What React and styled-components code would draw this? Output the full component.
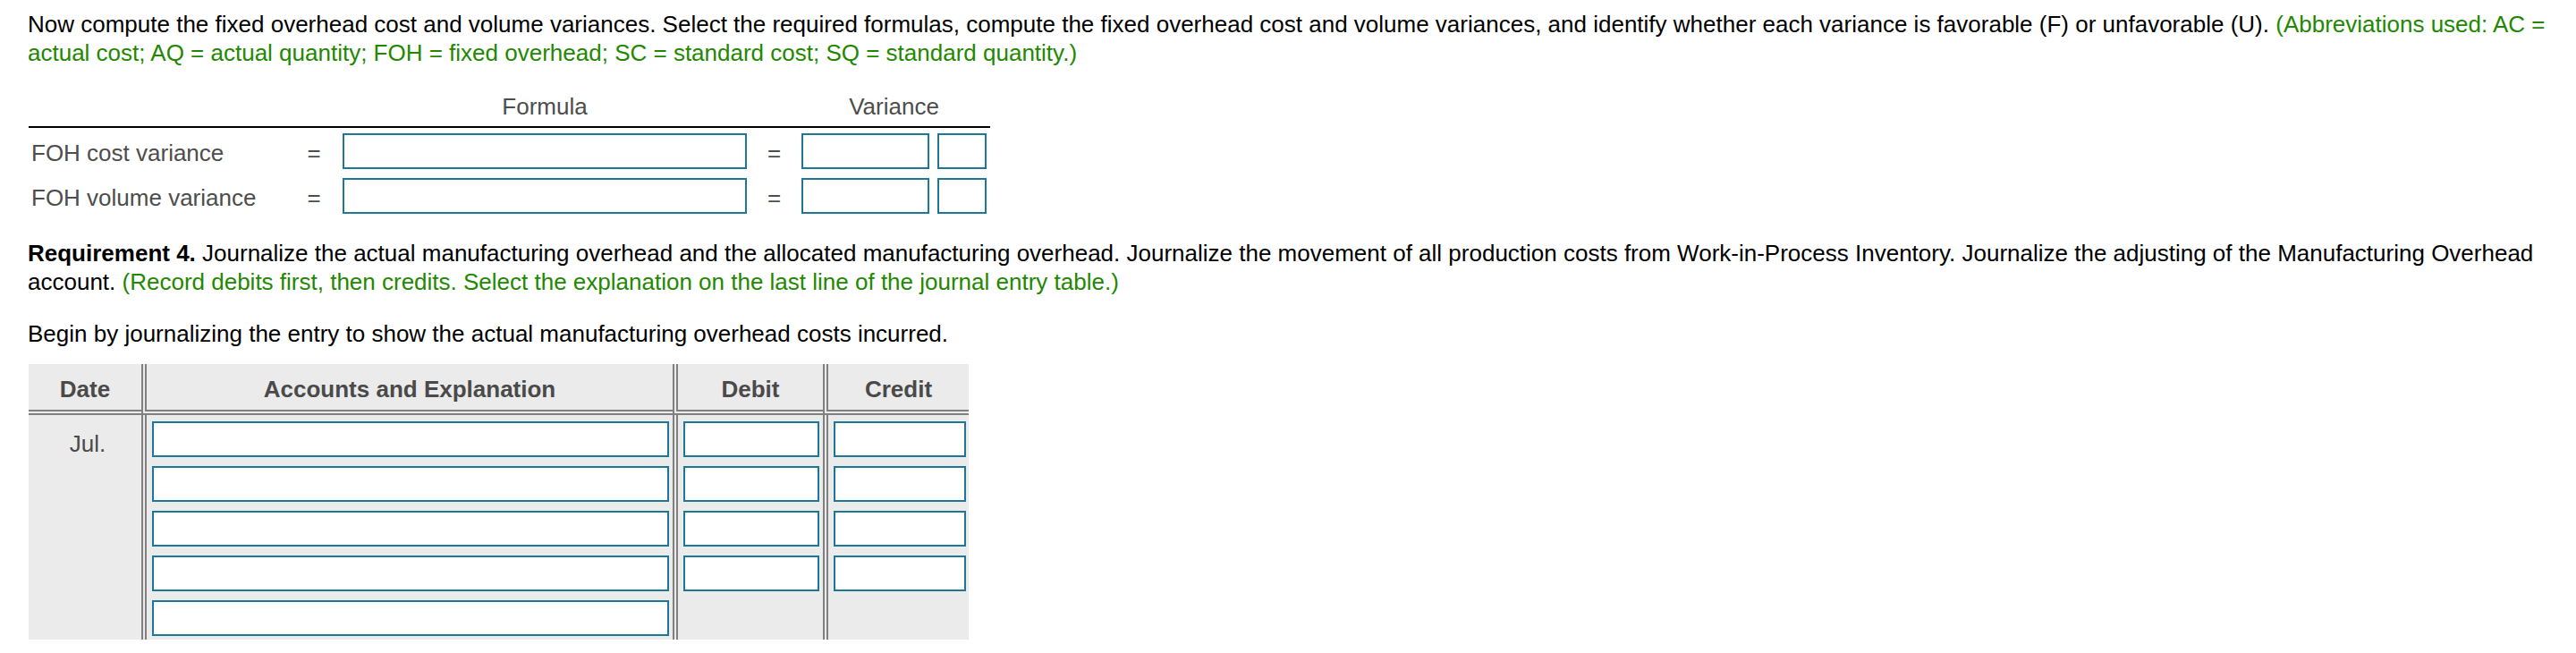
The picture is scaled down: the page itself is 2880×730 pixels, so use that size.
import React from 'react';
import styled, { createGlobalStyle } from 'styled-components';

const GlobalStyle = createGlobalStyle`
  body {
    margin: 0;
    background: #fff;
    font-family: "Liberation Sans", Arial, sans-serif;
    font-size: 26px;
    line-height: 32px;
    color: #000;
  }
`;

const Page = styled.div`
  padding: 11px 8px 0 31px;
`;

const Para = styled.p`
  margin: 0 0 ${props => props.$mb || 0}px;
`;

const Hint = styled.span`
  color: #228800;
`;

// Variance table
const FormulaTable = styled.div`
  width: 1075px;
  margin-left: 1px;
  color: #4d4d4d;
  margin-bottom: 28px;
`;

const HeaderRow = styled.div`
  display: flex;
  padding-bottom: 6px;
  border-bottom: 2px solid #000;
`;

const HeadCell = styled.div`
  width: ${props => props.$w}px;
  margin-left: ${props => props.$ml || 0}px;
  text-align: center;
`;

const Rows = styled.div`
  display: flex;
  flex-direction: column;
  gap: 10px;
  padding-top: 6px;
`;

const Row = styled.div`
  display: flex;
  align-items: center;
  height: 40px;
`;

const Label = styled.div`
  width: 302px;
  padding-left: 3px;
  box-sizing: border-box;
  padding-top: 4px;
`;

const Eq = styled.div`
  width: ${props => props.$w}px;
  text-align: center;
  padding-top: 3px;
`;

const Box = styled.input`
  box-sizing: border-box;
  width: ${props => props.$w}px;
  height: 40px;
  margin: 0 0 0 ${props => props.$ml || 0}px;
  padding: 0;
  border: 2px solid #1d7797;
  background: #fff;
  outline: none;
  font: inherit;
`;

// Journal table
const Journal = styled.div`
  display: grid;
  grid-template-columns: 126px 594px 168px 163px;
  width: 1051px;
  margin-left: 1px;
  background: #ebebeb;
  color: #4a4a4a;
`;

const JHead = styled.div`
  height: 57px;
  box-sizing: border-box;
  display: flex;
  align-items: center;
  justify-content: center;
  padding-top: 4px;
  font-weight: bold;
  border-bottom: 6px double #808080;
  border-left: ${props => (props.$first ? 'none' : '6px double #808080')};
`;

const JCol = styled.div`
  display: flex;
  flex-direction: column;
  gap: 10px;
  padding: 7px 0 4px 6px;
  border-left: ${props => (props.$first ? 'none' : '6px double #808080')};
`;

const DateCell = styled.div`
  text-align: center;
  padding-top: 9px;
`;

const accountRows = [0, 1, 2, 3, 4];
const amountRows = [0, 1, 2, 3];

export default function App() {
  return (
    <Page>
      <GlobalStyle />
      <Para $mb={28}>
        Now compute the fixed overhead cost and volume variances. Select the required formulas, compute the fixed overhead cost and volume variances, and identify whether each variance is favorable (F) or unfavorable (U).{' '}
        <Hint>(Abbreviations used: AC = actual cost; AQ = actual quantity; FOH = fixed overhead; SC = standard cost; SQ = standard quantity.)</Hint>
      </Para>

      <FormulaTable>
        <HeaderRow>
          <HeadCell $ml={351} $w={452}>Formula</HeadCell>
          <HeadCell $ml={61} $w={207}>Variance</HeadCell>
        </HeaderRow>
        <Rows>
          {['FOH cost variance', 'FOH volume variance'].map(label => (
            <Row key={label}>
              <Label>{label}</Label>
              <Eq $w={34}>=</Eq>
              <Box $ml={15} $w={452} />
              <Eq $w={61}>=</Eq>
              <Box $w={143} />
              <Box $ml={9} $w={55} />
            </Row>
          ))}
        </Rows>
      </FormulaTable>

      <Para $mb={26}>
        <b>Requirement 4.</b> Journalize the actual manufacturing overhead and the allocated manufacturing overhead. Journalize the movement of all production costs from Work-in-Process Inventory. Journalize the adjusting of the Manufacturing Overhead account.{' '}
        <Hint>(Record debits first, then credits. Select the explanation on the last line of the journal entry table.)</Hint>
      </Para>

      <Para $mb={18}>Begin by journalizing the entry to show the actual manufacturing overhead costs incurred.</Para>

      <Journal>
        <JHead $first>Date</JHead>
        <JHead>Accounts and Explanation</JHead>
        <JHead>Debit</JHead>
        <JHead>Credit</JHead>

        <JCol $first>
          <DateCell>Jul.</DateCell>
        </JCol>
        <JCol>
          {accountRows.map(i => (
            <Box key={i} $w={578} />
          ))}
        </JCol>
        <JCol>
          {amountRows.map(i => (
            <Box key={i} $w={152} />
          ))}
        </JCol>
        <JCol>
          {amountRows.map(i => (
            <Box key={i} $w={148} />
          ))}
        </JCol>
      </Journal>
    </Page>
  );
}
